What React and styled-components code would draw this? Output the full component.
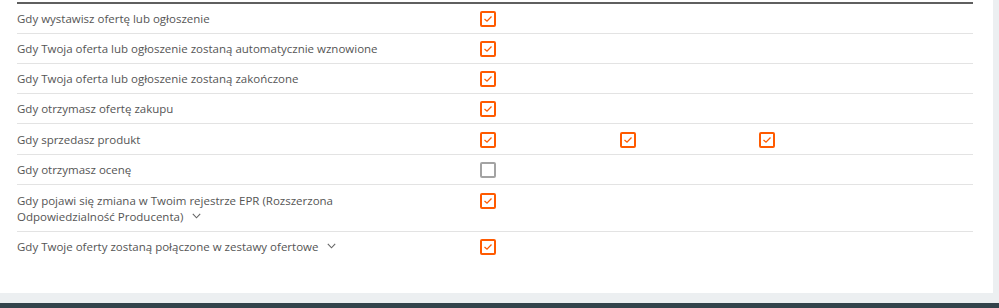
import React from "react";
import styled, { createGlobalStyle } from "styled-components";

const Global = createGlobalStyle`
  html, body { margin: 0; padding: 0; background: #eceff1; }
  body { font-family: "Open Sans", "Noto Sans", sans-serif; }
`;

const Page = styled.div`
  width: 999px;
  height: 308px;
  display: flex;
  flex-direction: column;
  background: #eceff1;
  overflow: hidden;
`;

const Panel = styled.div`
  width: 993px;
  height: 293px;
  flex: none;
  background: #fff;
  padding-top: 2px;
  box-sizing: border-box;
`;

const Table = styled.div`
  margin-left: 17px;
  width: 956px;
  border-top: 2px solid #5f5f5f;
`;

const Row = styled.div`
  display: grid;
  grid-template-columns: 463px 140px 139px 1fr;
  align-items: start;
  padding: ${(p) => (p.$tall ? "8px 0 6px" : "7px 0 6px")};
  border-bottom: ${(p) => (p.$last ? "none" : "1px solid #e3e3e3")};
`;

const Label = styled.div`
  font-size: 11.5px;
  line-height: 16px;
  color: #555;
  max-width: ${(p) => (p.$narrow ? "340px" : "none")};
`;

const Cell = styled.div`
  display: flex;
  height: 16px;
`;

const Chevron = styled.svg`
  display: inline-block;
  width: 9px;
  height: 6px;
  margin-left: 9px;
  vertical-align: 2px;
`;

const Box = styled.span`
  display: flex;
  align-items: center;
  justify-content: center;
  width: 16px;
  height: 16px;
  box-sizing: border-box;
  border: 2px solid ${(p) => (p.$checked ? "#ff5a00" : "#a3a3a3")};
  border-radius: 2px;
  background: #fff;
`;

const Bottom = styled.div`
  margin-top: 10px;
  height: 5px;
  background: #33434b;
`;

function Check({ checked }) {
  return (
    <Box $checked={checked}>
      {checked && (
        <svg width="10" height="8" viewBox="0 0 10 8">
          <polyline points="1.5,4 4,6.2 8.5,1.5" fill="none" stroke="#ff5a00" strokeWidth="1.3" />
        </svg>
      )}
    </Box>
  );
}

function Down() {
  return (
    <Chevron viewBox="0 0 9 6">
      <polyline points="0.8,0.8 4.5,4.8 8.2,0.8" fill="none" stroke="#666" strokeWidth="1.1" />
    </Chevron>
  );
}

const rows = [
  { label: "Gdy wystawisz ofertę lub ogłoszenie", checks: [true] },
  { label: "Gdy Twoja oferta lub ogłoszenie zostaną automatycznie wznowione", checks: [true] },
  { label: "Gdy Twoja oferta lub ogłoszenie zostaną zakończone", checks: [true] },
  { label: "Gdy otrzymasz ofertę zakupu", checks: [true] },
  { label: "Gdy sprzedasz produkt", checks: [true, true, true], tall: true },
  { label: "Gdy otrzymasz ocenę", checks: [false] },
  {
    label: "Gdy pojawi się zmiana w Twoim rejestrze EPR (Rozszerzona Odpowiedzialność Producenta)",
    checks: [true],
    chevron: true,
    narrow: true,
    tall: true,
  },
  { label: "Gdy Twoje oferty zostaną połączone w zestawy ofertowe", checks: [true], chevron: true },
];

export default function App() {
  return (
    <>
      <Global />
      <Page>
        <Panel>
          <Table>
            {rows.map((r, i) => (
              <Row key={i} $last={i === rows.length - 1} $tall={r.tall}>
                <Label $narrow={r.narrow}>
                  {r.label}
                  {r.chevron && <Down />}
                </Label>
                {r.checks.map((c, j) => (
                  <Cell key={j}>
                    <Check checked={c} />
                  </Cell>
                ))}
              </Row>
            ))}
          </Table>
        </Panel>
        <Bottom />
      </Page>
    </>
  );
}
